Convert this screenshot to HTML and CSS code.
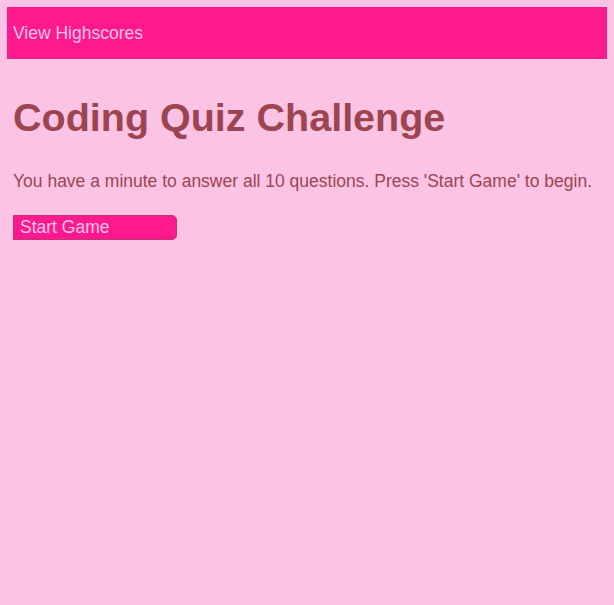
FILE: index.html
```html
<!DOCTYPE html>
<html>
<head>
<meta charset="utf-8">
<link rel="stylesheet" href="styles.css">
</head>
<body>
<header class="topbar">
  <a class="highscores">View Highscores</a>
</header>
<main class="intro">
  <h1 class="title">Coding Quiz Challenge</h1>
  <p class="lead">You have a minute to answer all 10 questions. Press 'Start Game' to begin.</p>
  <button class="start">Start Game</button>
</main>
</body>
</html>
```
FILE: styles.css
```css
html, body {
  background: #fdc3e4;
}
body {
  margin: 7px;
  font-family: "Liberation Sans", Arial, sans-serif;
  color: #9c4450;
}
.topbar {
  background: #fe1a8e;
  height: 52px;
  display: flex;
  align-items: center;
  padding: 0 6px;
}
.highscores {
  color: #fdc3e4;
  font-size: 17.5px;
  padding-top: 1px;
}
.intro {
  padding: 0 6px;
}
.title {
  font-size: 39.5px;
  margin: 36px 0 0;
  line-height: 44px;
}
.lead {
  font-size: 17.5px;
  margin: 32px 0 0;
  line-height: 20px;
}
.start {
  margin-top: 24px;
  width: 164px;
  height: 25px;
  background: #fe1a8e;
  color: #fdc3e4;
  border: 1px solid #c03570;
  border-radius: 0 5px 5px 0;
  font-family: "Liberation Sans", Arial, sans-serif;
  font-size: 17.5px;
  text-align: left;
  padding: 0 6px;
}
```
